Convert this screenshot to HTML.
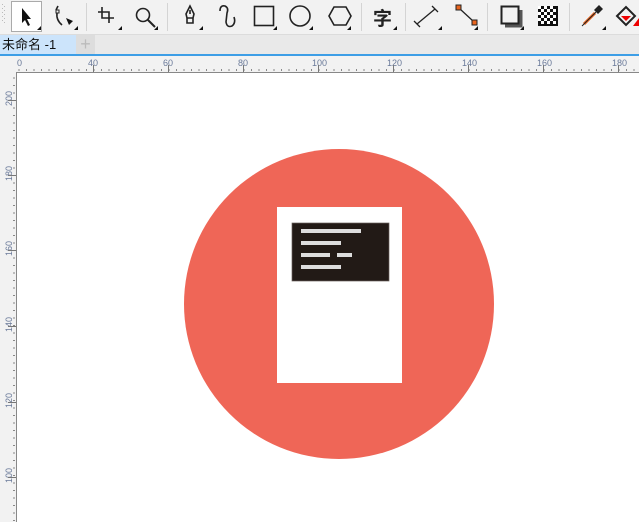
<!DOCTYPE html>
<html><head><meta charset="utf-8"><style>
*{margin:0;padding:0;box-sizing:border-box}
body{width:639px;height:522px;overflow:hidden;background:#f2f2f2;font-family:"Liberation Sans","Noto Sans CJK SC",sans-serif;position:relative}
.abs{position:absolute}
</style></head><body>
<svg class="abs" style="left:0;top:0" width="639" height="35" viewBox="0 0 639 35">
<rect width="639" height="35" fill="#f2f2f2"/>
<line x1="0" y1="34.5" x2="639" y2="34.5" stroke="#dcdcdc"/>
<g fill="#bbb"><rect x="2" y="4" width="1" height="1"/><rect x="4" y="6" width="1" height="1"/><rect x="2" y="8" width="1" height="1"/><rect x="4" y="10" width="1" height="1"/><rect x="2" y="12" width="1" height="1"/><rect x="4" y="14" width="1" height="1"/><rect x="2" y="16" width="1" height="1"/><rect x="4" y="18" width="1" height="1"/><rect x="2" y="20" width="1" height="1"/><rect x="4" y="22" width="1" height="1"/></g>
<rect x="11.5" y="1.5" width="30" height="30" fill="#fff" stroke="#aaa"/>
<g stroke="#d4d4d4"><line x1="86.5" y1="3" x2="86.5" y2="31"/><line x1="167.5" y1="3" x2="167.5" y2="31"/><line x1="361.5" y1="3" x2="361.5" y2="31"/><line x1="405.5" y1="3" x2="405.5" y2="31"/><line x1="487.5" y1="3" x2="487.5" y2="31"/><line x1="569.5" y1="3" x2="569.5" y2="31"/></g>
<g fill="#111">
<path d="M22 8 L22 23 L25 20 L28 26 L30 25 L27 19 L31 19 Z"/>
<path d="M37 30 L41 30 L41 26 Z"/><path d="M74 30 L78 30 L78 26 Z"/><path d="M118 30 L122 30 L122 26 Z"/><path d="M154 30 L158 30 L158 26 Z"/><path d="M199 30 L203 30 L203 26 Z"/><path d="M273 30 L277 30 L277 26 Z"/><path d="M309 30 L313 30 L313 26 Z"/><path d="M347 30 L351 30 L351 26 Z"/><path d="M393 30 L397 30 L397 26 Z"/><path d="M438 30 L442 30 L442 26 Z"/><path d="M474 30 L478 30 L478 26 Z"/><path d="M520 30 L524 30 L524 26 Z"/><path d="M602 30 L606 30 L606 26 Z"/>
<path d="M66 18 L73 21 L69 25 Z"/>
</g>
<g fill="none" stroke="#222" stroke-width="1.6">
<path d="M58 6 L56 10 M57 13 Q56 20 62 25"/><rect x="56" y="10" width="3" height="3" stroke-width="1"/>
<path d="M102 7 V18 H114 M98 12 H109 V23"/>
<circle cx="143" cy="15" r="6.5"/><path d="M148 20 L155 27" stroke-width="2"/>
<path d="M190 6 L186 14 L187 18 H193 L194 14 Z M187 18 V23 H193 V18 M190 10 V14"/>
<path d="M220 11 Q220 5 225 6 Q229 8 227 13 L226 22 Q227 28 232 26 Q236 23 234 17"/>
<rect x="254.5" y="6.5" width="19" height="19"/>
<circle cx="300" cy="16" r="10"/>
<path d="M334 7 H346 L351 16 L346 25 H334 L329 16 Z"/>
<path d="M417 24 L435 9 M414 21 L420 27 M432 6 L438 12" stroke-width="1.3"/>
<path d="M460 9 L473 21" stroke-width="1.3"/>
<rect x="501.5" y="6.5" width="17" height="17" stroke-width="2"/>
</g>
<path d="M505 26 H521 V10" stroke="#555" stroke-width="3" fill="none"/>
<text x="373" y="25" font-size="19" font-weight="bold" fill="#222" font-family="Noto Sans CJK SC,sans-serif">字</text>
<rect x="456" y="5" width="5" height="5" fill="#e8641e" stroke="#222"/><rect x="472" y="20" width="5" height="5" fill="#e8641e" stroke="#222"/>
<g><rect x="538" y="6" width="20" height="20" fill="#111"/>
<g fill="#fff"><rect x="538" y="6" width="3" height="3"/><rect x="544" y="6" width="3" height="3"/><rect x="550" y="6" width="3" height="3"/><rect x="541" y="9" width="3" height="3"/><rect x="547" y="9" width="3" height="3"/><rect x="553" y="9" width="3" height="3"/><rect x="538" y="12" width="3" height="3"/><rect x="544" y="12" width="3" height="3"/><rect x="550" y="12" width="3" height="3"/><rect x="541" y="15" width="3" height="3"/><rect x="547" y="15" width="3" height="3"/><rect x="553" y="15" width="3" height="3"/><rect x="538" y="18" width="3" height="3"/><rect x="544" y="18" width="3" height="3"/><rect x="550" y="18" width="3" height="3"/><rect x="541" y="21" width="3" height="3"/><rect x="547" y="21" width="3" height="3"/><rect x="553" y="21" width="3" height="3"/></g></g>
<path d="M584 24 L595 13" stroke="#e8641e" stroke-width="3"/><path d="M582 26 L596 12" stroke="#222" stroke-width="1" fill="none"/>
<path d="M594 10 L599 5 L603 9 L598 14 Z" fill="#222"/>
<path d="M617 16 L626 7 L635 16 L626 25 Z" fill="none" stroke="#222" stroke-width="2"/>
<path d="M621 16 H631 L626 21 Z" fill="#e00"/><path d="M633 26 L639 18 V26 Z" fill="#e00"/>
</svg>
<div class="abs" style="left:0;top:35px;width:639px;height:19px;background:#e9e9e9"></div>
<div class="abs" style="left:0;top:35px;width:76px;height:19px;background:#cce4fb;font-size:13px;line-height:19px;padding-left:2px;color:#111">未命名 -1</div>
<div class="abs" style="left:76px;top:35px;width:19px;height:19px;background:#ddd;color:#bbb;font-size:18px;line-height:18px;text-align:center">+</div>
<div class="abs" style="left:0;top:54px;width:639px;height:2px;background:#3d9ee6"></div>
<svg class="abs" style="left:0;top:56px" width="639" height="466">
<defs>
<pattern id="hd" x="18.5" y="0" width="7.5" height="20" patternUnits="userSpaceOnUse"><rect x="0" y="13" width="1" height="2" fill="#888"/></pattern>
<pattern id="vd" x="0" y="6.5" width="20" height="7.5" patternUnits="userSpaceOnUse"><rect x="13" y="0" width="2" height="1" fill="#888"/></pattern>
</defs>
<rect width="639" height="466" fill="#f2f2f2"/>
<rect x="17" y="0" width="622" height="16" fill="url(#hd)"/>
<rect x="0" y="17" width="16" height="449" fill="url(#vd)"/>
<g font-size="9" fill="#6a7a9a" font-family="Liberation Sans,sans-serif">
<text x="17" y="10">0</text><text x="88" y="10">40</text><text x="163" y="10">60</text><text x="238" y="10">80</text><text x="312" y="10">100</text><text x="387" y="10">120</text><text x="462" y="10">140</text><text x="537" y="10">160</text><text x="612" y="10">180</text>
<g transform="rotate(-90)"><text x="-50" y="12">200</text><text x="-125" y="12">180</text><text x="-200" y="12">160</text><text x="-276" y="12">140</text><text x="-352" y="12">120</text><text x="-427" y="12">100</text></g>
</g>
<g stroke="#888"><line x1="16" y1="16.5" x2="639" y2="16.5"/><line x1="16.5" y1="16" x2="16.5" y2="466"/></g>
<g stroke="#777" stroke-width="1">
<path d="M93.5 9V16M168.5 9V16M243.5 9V16M318.5 9V16M393.5 9V16M468.5 9V16M543.5 9V16M618.5 9V16"/>
<path d="M8 44.5H16M8 119.5H16M8 194.5H16M8 270.5H16M8 346.5H16M8 421.5H16"/>
</g>
</svg>
<div class="abs" style="left:17px;top:73px;width:622px;height:449px;background:#fff"></div>
<svg class="abs" style="left:0;top:0" width="639" height="522">
<circle cx="339" cy="304" r="155" fill="#ef6657"/>
<rect x="277" y="207" width="125" height="176" fill="#fff"/>
<rect x="292" y="223" width="97" height="58" fill="#221a16" stroke="#6b625e" stroke-width="0.7"/>
<g fill="#ddd"><rect x="301" y="229" width="60" height="4"/><rect x="301" y="241" width="40" height="4"/><rect x="301" y="253" width="29" height="4"/><rect x="337" y="253" width="15" height="4"/><rect x="301" y="265" width="40" height="4"/></g>
</svg>
</body></html>
